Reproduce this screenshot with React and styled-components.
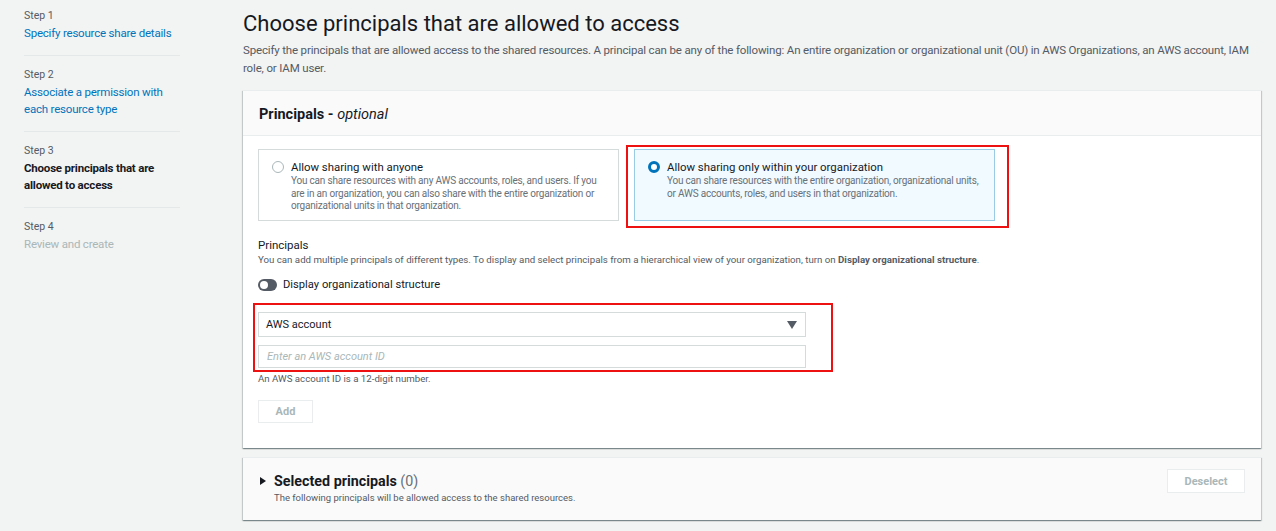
import React from 'react'
import styled, { createGlobalStyle } from 'styled-components'

const GlobalStyle = createGlobalStyle`
  html, body {
    margin: 0;
    padding: 0;
    background: #f2f3f3;
    font-family: Roboto, "Open Sans", sans-serif;
    color: #16191f;
  }
  * { box-sizing: border-box; }
`

const Page = styled.div`
  display: flex;
  min-height: 531px;
  padding: 0 15px 0 24px;
`

const Nav = styled.nav`
  width: 156px;
  flex-shrink: 0;
  margin-right: 63px;
  padding-top: 9px;
`

const StepItem = styled.div`
  padding: 0 0 13px;
  margin-bottom: 12px;
  border-bottom: ${p => (p.last ? 'none' : '1px solid #e5e8e8')};
`

const StepLabel = styled.div`
  font-size: 10.5px;
  line-height: 14px;
  color: #545b64;
  margin-bottom: 2px;
`

const StepTitle = styled.div`
  font-size: 11.5px;
  line-height: 17px;
  letter-spacing: -0.2px;
  color: ${p => (p.state === 'done' ? '#0073bb' : p.state === 'current' ? '#16191f' : '#aab7b8')};
  font-weight: ${p => (p.state === 'current' ? 700 : 400)};
`

const Main = styled.main`
  flex: 1;
  padding-top: 8px;
`

const Title = styled.h1`
  margin: 0;
  font-size: 22px;
  font-weight: 400;
  line-height: 32px;
`

const Lead = styled.p`
  margin: 1px 0 13px;
  font-size: 11.5px;
  letter-spacing: -0.16px;
  line-height: 18px;
  color: #545b64;
`

const Panel = styled.section`
  background: #fff;
  border-top: 1px solid #eaeded;
  box-shadow: 0 1px 1px 0 rgba(0, 28, 36, 0.3), 1px 1px 1px 0 rgba(0, 28, 36, 0.15), -1px 1px 1px 0 rgba(0, 28, 36, 0.15);
  margin-bottom: 9px;
`

const PanelHeader = styled.header`
  background: #fafafa;
  border-bottom: 1px solid #eaeded;
  padding: 14px 16px 10px;
  font-size: 14.5px;
  font-weight: 700;
  line-height: 20px;
  em {
    font-weight: 400;
  }
`

const PanelBody = styled.div`
  padding: 13px 15px 25px;
`

const Tiles = styled.div`
  display: grid;
  grid-template-columns: 361px 361px;
  gap: 15px;
  margin-bottom: 16px;
`

const TileWrap = styled.div`
  position: relative;
`

const Highlight = styled.div`
  position: absolute;
  pointer-events: none;
  border: 2px solid #ee1111;
  top: ${p => p.t}px;
  left: ${p => p.l}px;
  right: ${p => p.r}px;
  bottom: ${p => p.b}px;
`

const Tile = styled.label`
  display: flex;
  gap: 7px;
  height: 72px;
  padding: 9px 12px 0 13px;
  border: 1px solid ${p => (p.selected ? '#99cbe4' : '#d5dbdb')};
  background: ${p => (p.selected ? '#f1faff' : '#fff')};
`

const Radio = styled.span`
  flex-shrink: 0;
  width: 12px;
  height: 12px;
  margin-top: 2px;
  border-radius: 50%;
  border: ${p => (p.checked ? '3.5px solid #0073bb' : '1px solid #aab7b8')};
  background: #fff;
`

const TileText = styled.div`
  display: flex;
  flex-direction: column;
`

const TileTitle = styled.span`
  font-size: 11.4px;
  line-height: 16px;
  color: #16191f;
`

const TileDesc = styled.span`
  font-size: 10px;
  line-height: 12.5px;
  letter-spacing: -0.2px;
  color: #687078;
`

const FieldLabel = styled.div`
  font-size: 11.5px;
  line-height: 16px;
`

const FieldDesc = styled.div`
  font-size: 9.7px;
  line-height: 13px;
  color: #545b64;
  b {
    font-weight: 700;
  }
`

const ToggleRow = styled.div`
  display: flex;
  align-items: center;
  gap: 6px;
  margin: 11px 0 10px;
  font-size: 11.2px;
  line-height: 16px;
`

const Toggle = styled.span`
  position: relative;
  width: 19px;
  height: 12px;
  border-radius: 6px;
  background: #545b64;
  &::after {
    content: '';
    position: absolute;
    top: 2px;
    left: 2px;
    width: 8px;
    height: 8px;
    border-radius: 50%;
    background: #fff;
  }
`

const Fields = styled.div`
  position: relative;
  width: 548px;
  display: flex;
  flex-direction: column;
  gap: 8px;
  padding-top: 9px;
`

const Select = styled.div`
  display: flex;
  align-items: center;
  justify-content: space-between;
  height: 25px;
  padding: 0 8px 0 7px;
  border: 1px solid #d5dbdb;
  font-size: 11px;
  color: #16191f;
`

const Input = styled.input`
  height: 23px;
  padding: 0 8px;
  border: 1px solid #d5dbdb;
  font-family: inherit;
  font-size: 11px;
  &::placeholder {
    color: #aab7b8;
    font-style: italic;
  }
`

const Hint = styled.div`
  margin-top: 5px;
  font-size: 9.7px;
  line-height: 12px;
  color: #545b64;
`

const Button = styled.button`
  height: ${p => p.h}px;
  width: ${p => p.w}px;
  padding: 0;
  border: 1px solid #eaeded;
  background: #fff;
  color: #aab7b8;
  font-family: inherit;
  font-weight: 700;
  font-size: 11px;
  cursor: default;
`

const AddButton = styled(Button)`
  margin-top: 15px;
`

const Collapsed = styled.section`
  display: flex;
  align-items: flex-start;
  justify-content: space-between;
  background: #fafafa;
  border-top: 1px solid #eaeded;
  box-shadow: 0 1px 1px 0 rgba(0, 28, 36, 0.3), 1px 1px 1px 0 rgba(0, 28, 36, 0.15), -1px 1px 1px 0 rgba(0, 28, 36, 0.15);
  padding: 11px 16px 15px 17px;
`

const CollapsedHead = styled.div`
  display: flex;
  gap: 8px;
  padding-top: 2px;
`

const Caret = styled.span`
  width: 0;
  height: 0;
  margin-top: 6px;
  border-left: 6px solid #16191f;
  border-top: 4.5px solid transparent;
  border-bottom: 4.5px solid transparent;
`

const CollapsedTitle = styled.div`
  font-size: 14.3px;
  line-height: 20px;
  font-weight: 700;
  span {
    font-weight: 400;
    color: #687078;
  }
`

const CollapsedDesc = styled.div`
  font-size: 9.5px;
  line-height: 14px;
  color: #545b64;
`

const steps = [
  { n: 1, title: 'Specify resource share details', state: 'done' },
  { n: 2, title: 'Associate a permission with each resource type', state: 'done' },
  { n: 3, title: 'Choose principals that are allowed to access', state: 'current' },
  { n: 4, title: 'Review and create', state: 'todo' },
]

export default function App() {
  return (
    <>
      <GlobalStyle />
      <Page>
        <Nav>
          {steps.map((s, i) => (
            <StepItem key={s.n} last={i === steps.length - 1}>
              <StepLabel>Step {s.n}</StepLabel>
              <StepTitle state={s.state}>{s.title}</StepTitle>
            </StepItem>
          ))}
        </Nav>
        <Main>
          <Title>Choose principals that are allowed to access</Title>
          <Lead>
            Specify the principals that are allowed access to the shared resources. A principal can be any of the
            following: An entire organization or organizational unit (OU) in AWS Organizations, an AWS account, IAM
            role, or IAM user.
          </Lead>
          <Panel>
            <PanelHeader>
              Principals - <em>optional</em>
            </PanelHeader>
            <PanelBody>
              <Tiles>
                <TileWrap>
                  <Tile>
                    <Radio />
                    <TileText>
                      <TileTitle>Allow sharing with anyone</TileTitle>
                      <TileDesc>
                        You can share resources with any AWS accounts, roles, and users. If you are in an organization,
                        you can also share with the entire organization or organizational units in that organization.
                      </TileDesc>
                    </TileText>
                  </Tile>
                </TileWrap>
                <TileWrap>
                  <Tile selected>
                    <Radio checked />
                    <TileText>
                      <TileTitle>Allow sharing only within your organization</TileTitle>
                      <TileDesc>
                        You can share resources with the entire organization, organizational units, or AWS accounts,
                        roles, and users in that organization.
                      </TileDesc>
                    </TileText>
                  </Tile>
                  <Highlight t={-4} l={-8} r={-14} b={-7} />
                </TileWrap>
              </Tiles>
              <FieldLabel>Principals</FieldLabel>
              <FieldDesc>
                You can add multiple principals of different types. To display and select principals from a
                hierarchical view of your organization, turn on <b>Display organizational structure</b>.
              </FieldDesc>
              <ToggleRow>
                <Toggle />
                Display organizational structure
              </ToggleRow>
              <Fields>
                <Select>
                  AWS account
                  <svg width="10" height="8" viewBox="0 0 10 8">
                    <path d="M0 0h10L5 8z" fill="#545b64" />
                  </svg>
                </Select>
                <Input placeholder="Enter an AWS account ID" />
                <Highlight t={0} l={-5} r={-27} b={-4} />
              </Fields>
              <Hint>An AWS account ID is a 12-digit number.</Hint>
              <AddButton w={55} h={23}>Add</AddButton>
            </PanelBody>
          </Panel>
          <Collapsed>
            <CollapsedHead>
              <Caret />
              <div>
                <CollapsedTitle>
                  Selected principals <span>(0)</span>
                </CollapsedTitle>
                <CollapsedDesc>The following principals will be allowed access to the shared resources.</CollapsedDesc>
              </div>
            </CollapsedHead>
            <Button w={78} h={24}>Deselect</Button>
          </Collapsed>
        </Main>
      </Page>
    </>
  )
}
